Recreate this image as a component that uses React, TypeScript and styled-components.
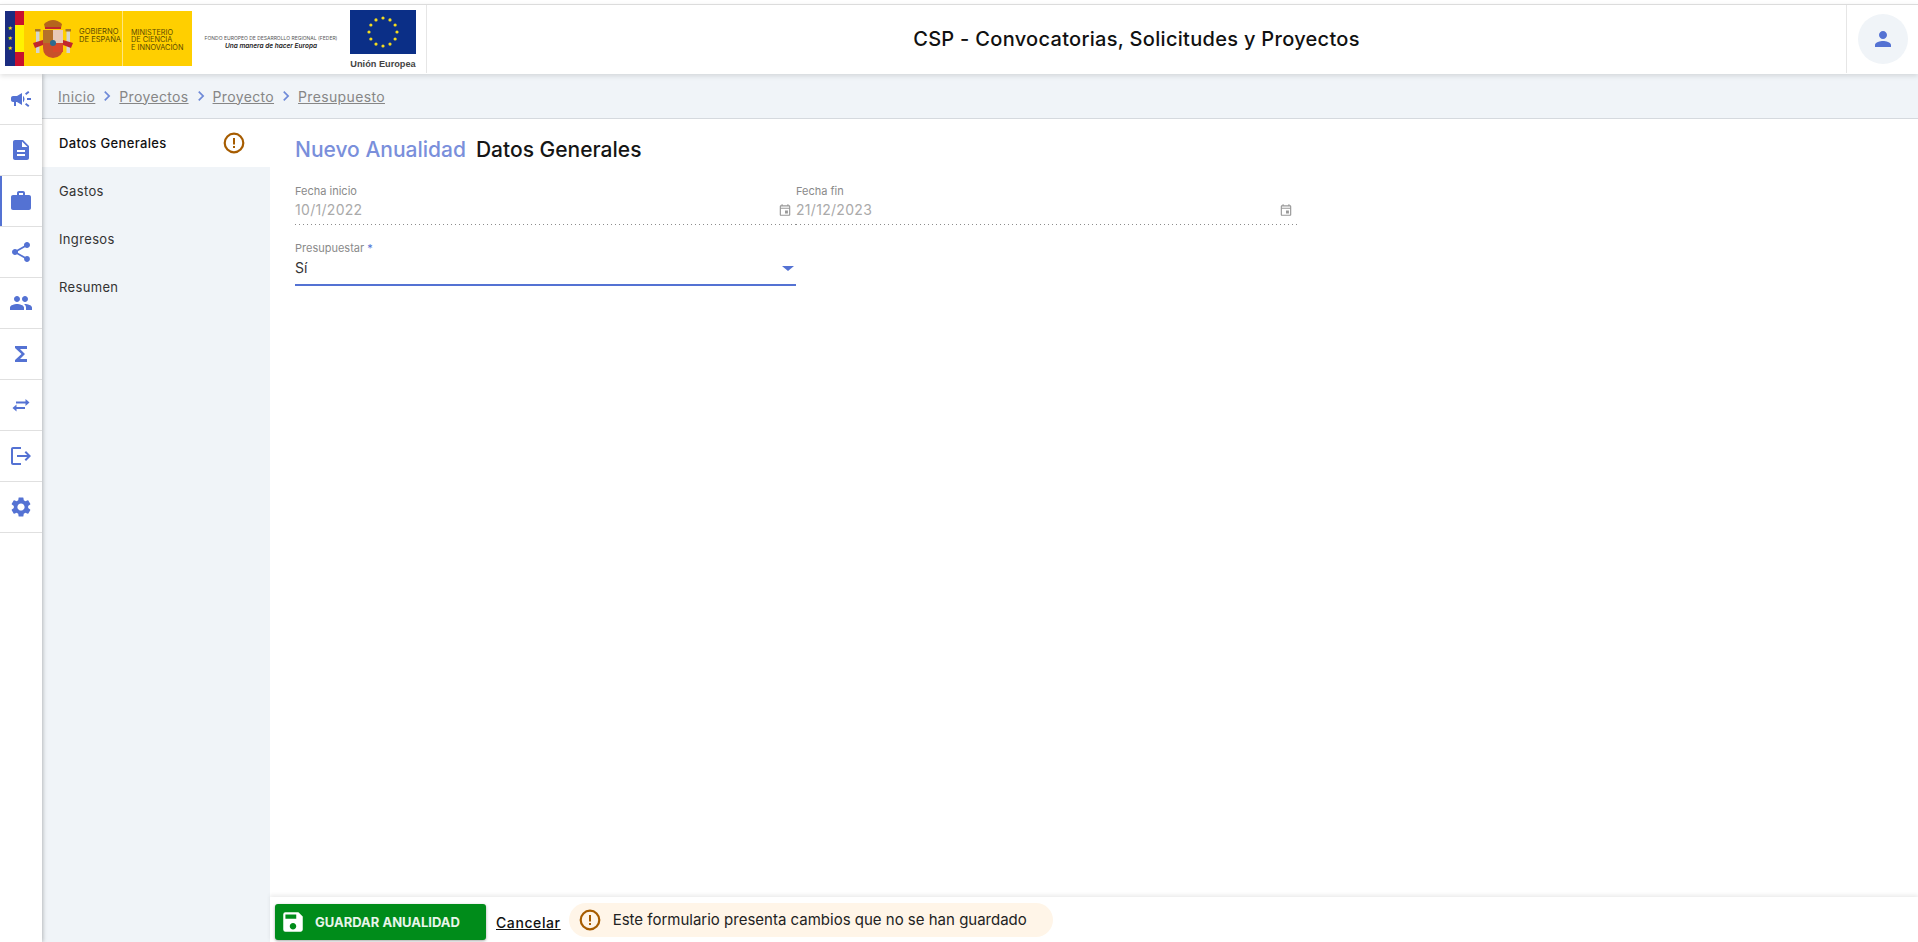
import React from "react";
import styled, { createGlobalStyle } from "styled-components";
import {
  MdCampaign,
  MdDescription,
  MdWork,
  MdShare,
  MdPeople,
  MdFunctions,
  MdLogout,
  MdSettings,
  MdPerson,
  MdSave,
  MdOutlineEvent,
  MdChevronRight,
} from "react-icons/md";

function SwapArrows() {
  return (
    <svg width="20" height="14" viewBox="0 0 20 14" fill="none" stroke="currentColor" strokeWidth="2">
      <path d="M5 4.5 H17" />
      <path d="M14.5 1 L18.5 4.5 L14.5 8" fill="currentColor" stroke="none" />
      <path d="M3 10 H14" />
      <path d="M5.5 6.5 L1.5 10 L5.5 13.5" fill="currentColor" stroke="none" />
    </svg>
  );
}

function WarnIcon() {
  return (
    <svg width="24" height="24" viewBox="0 0 24 24" fill="none">
      <circle cx="12" cy="12" r="9.3" stroke="#a65c00" strokeWidth="2.2" />
      <rect x="11" y="7" width="2" height="6.5" fill="#a65c00" />
      <rect x="11" y="15" width="2" height="2" fill="#a65c00" />
    </svg>
  );
}

const railItems = [
  { icon: MdCampaign },
  { icon: MdDescription },
  { icon: MdWork, active: true },
  { icon: MdShare },
  { icon: MdPeople },
  { icon: MdFunctions },
  { icon: SwapArrows },
  { icon: MdLogout },
  { icon: MdSettings },
];

const crumbs = ["Inicio", "Proyectos", "Proyecto", "Presupuesto"];

function EuStars() {
  const stars = Array.from({ length: 12 }, (_, i) => {
    const a = (i * Math.PI) / 6;
    return { x: 33 + 14 * Math.sin(a), y: 22 - 14 * Math.cos(a) };
  });
  return (
    <svg width="66" height="44" viewBox="0 0 66 44">
      <rect width="66" height="44" fill="#0b2f87" />
      {stars.map((s, i) => (
        <circle key={i} cx={s.x} cy={s.y} r="1.6" fill="#f5dc1e" />
      ))}
    </svg>
  );
}

function Shield() {
  return (
    <svg width="40" height="40" viewBox="0 0 40 40">
      <rect x="3" y="12" width="3.5" height="22" fill="#d4d4d0" />
      <rect x="33.5" y="12" width="3.5" height="22" fill="#d4d4d0" />
      <rect x="2" y="10" width="5.5" height="2.5" fill="#a8772a" />
      <rect x="32.5" y="10" width="5.5" height="2.5" fill="#a8772a" />
      <path d="M0 24 L10 21 L10 26 L2 29 Z" fill="#c1272d" />
      <path d="M40 24 L30 21 L30 26 L38 29 Z" fill="#c1272d" />
      <path d="M11 5 Q20 -3 29 5 L28 9 L12 9 Z" fill="#b5651d" />
      <rect x="12" y="8" width="16" height="2" fill="#c1272d" />
      <path d="M10 11 H30 V29 Q30 38 20 39 Q10 38 10 29 Z" fill="#c8502a" />
      <rect x="10" y="11" width="10" height="13" fill="#b5702a" />
      <rect x="20" y="11" width="10" height="13" fill="#e8c9b8" />
      <rect x="20" y="24" width="10" height="9" fill="#d8482a" />
      <circle cx="20" cy="24" r="3" fill="#2d6b8f" />
    </svg>
  );
}

export default function App() {
  return (
    <Page>
      <GlobalStyle />
      <Header>
        <LogoCell>
          <GovLogo>
            <Flag>
              <FlagBlue>
                <FlagStar>★</FlagStar>
                <FlagStar>★</FlagStar>
                <FlagStar>★</FlagStar>
              </FlagBlue>
              <FlagStripes />
            </Flag>
            <ShieldBox>
              <Shield />
            </ShieldBox>
            <GovText>
              GOBIERNO
              <br />
              DE ESPAÑA
            </GovText>
            <GovDivider />
            <MinistryText>
              MINISTERIO
              <br />
              DE CIENCIA
              <br />E INNOVACIÓN
            </MinistryText>
          </GovLogo>
          <Feder>
            <FederTitle>FONDO EUROPEO DE DESARROLLO REGIONAL (FEDER)</FederTitle>
            <FederSlogan>Una manera de hacer Europa</FederSlogan>
          </Feder>
          <EuLogo>
            <EuStars />
            <EuName>Unión Europea</EuName>
          </EuLogo>
        </LogoCell>
        <AppTitle>CSP - Convocatorias, Solicitudes y Proyectos</AppTitle>
        <UserCell>
          <Avatar>
            <MdPerson />
          </Avatar>
        </UserCell>
      </Header>
      <Body>
        <Rail>
          {railItems.map(({ icon: Icon, active }, i) => (
            <RailItem key={i} $active={active}>
              <Icon />
            </RailItem>
          ))}
        </Rail>
        <Main>
          <Breadcrumb>
            {crumbs.map((c, i) => (
              <React.Fragment key={c}>
                {i > 0 && (
                  <CrumbSep>
                    <MdChevronRight />
                  </CrumbSep>
                )}
                <Crumb>{c}</Crumb>
              </React.Fragment>
            ))}
          </Breadcrumb>
          <Workspace>
            <SideMenu>
              <MenuItem $active>
                Datos Generales
                <MenuWarn>
                  <WarnIcon />
                </MenuWarn>
              </MenuItem>
              <MenuItem>Gastos</MenuItem>
              <MenuItem>Ingresos</MenuItem>
              <MenuItem>Resumen</MenuItem>
            </SideMenu>
            <Content>
              <Form>
                <TitleRow>
                  <TitleAccent>Nuevo Anualidad</TitleAccent>
                  <TitleDark>Datos Generales</TitleDark>
                </TitleRow>
                <DateRow>
                  <DateField>
                    <FieldLabel>Fecha inicio</FieldLabel>
                    <DateValue>
                      10/1/2022
                      <MdOutlineEvent />
                    </DateValue>
                  </DateField>
                  <DateField>
                    <FieldLabel>Fecha fin</FieldLabel>
                    <DateValue>
                      21/12/2023
                      <MdOutlineEvent />
                    </DateValue>
                  </DateField>
                </DateRow>
                <SelectField>
                  <FieldLabel>
                    Presupuestar <Required>*</Required>
                  </FieldLabel>
                  <SelectValue>
                    Sí
                    <SelectArrow />
                  </SelectValue>
                </SelectField>
              </Form>
              <Footer>
                <SaveButton>
                  <MdSave />
                  GUARDAR ANUALIDAD
                </SaveButton>
                <CancelLink>Cancelar</CancelLink>
                <Notice>
                  <WarnIcon />
                  Este formulario presenta cambios que no se han guardado
                </Notice>
              </Footer>
            </Content>
          </Workspace>
        </Main>
      </Body>
    </Page>
  );
}

const GlobalStyle = createGlobalStyle`
  html, body {
    margin: 0;
    padding: 0;
    height: 100%;
    background: #fff;
    font-family: Inter, "Noto Sans", sans-serif;
  }
  * {
    box-sizing: border-box;
  }
`;

const Page = styled.div`
  height: 942px;
  overflow: hidden;
  display: flex;
  flex-direction: column;
  padding-top: 4px;
`;

const Header = styled.header`
  height: 70px;
  flex: none;
  display: flex;
  background: #fff;
  border-top: 1px solid #dcdcdc;
  position: relative;
  z-index: 3;
  box-shadow: 0 2px 5px rgba(0, 0, 0, 0.12);
`;

const LogoCell = styled.div`
  width: 427px;
  height: 68px;
  flex: none;
  display: flex;
  align-items: flex-start;
  padding: 5px 0 0 5px;
  border-right: 1px solid #e6e6e6;
`;

const GovLogo = styled.div`
  width: 187px;
  height: 55px;
  flex: none;
  display: flex;
  align-items: center;
  margin-top: 1px;
  background: #ffcf00;
`;

const Flag = styled.div`
  width: 19px;
  height: 100%;
  flex: none;
  display: flex;
`;

const FlagBlue = styled.div`
  width: 10px;
  background: #1b2c80;
  display: flex;
  flex-direction: column;
  justify-content: center;
  align-items: center;
  gap: 5px;
`;

const FlagStar = styled.span`
  color: #ffe600;
  font-size: 5px;
  line-height: 5px;
`;

const FlagStripes = styled.div`
  width: 9px;
  background: linear-gradient(#c8102e 0 25%, #fff200 25% 75%, #c8102e 75%);
`;

const ShieldBox = styled.div`
  width: 40px;
  height: 40px;
  flex: none;
  margin-left: 9px;
  margin-right: 6px;
`;

const GovText = styled.div`
  width: 43px;
  font-size: 7.6px;
  line-height: 8px;
  color: #5b4a00;
  white-space: nowrap;
  margin-bottom: 5px;
`;

const GovDivider = styled.div`
  width: 1px;
  height: 100%;
  background: #ffe680;
  margin-right: 8px;
`;

const MinistryText = styled.div`
  font-size: 7.3px;
  line-height: 7.5px;
  color: #5b4a00;
  white-space: nowrap;
  margin-top: 3px;
`;

const Feder = styled.div`
  width: 158px;
  flex: none;
  display: flex;
  flex-direction: column;
  align-items: center;
  padding-top: 25px;
`;

const FederTitle = styled.div`
  font-size: 5px;
  line-height: 7px;
  color: #555;
  white-space: nowrap;
`;

const FederSlogan = styled.div`
  font-size: 6.5px;
  line-height: 9px;
  font-style: italic;
  font-weight: 600;
  color: #222;
  white-space: nowrap;
`;

const EuLogo = styled.div`
  width: 66px;
  flex: none;
  display: flex;
  flex-direction: column;
  svg {
    display: block;
  }
`;

const EuName = styled.div`
  font-family: "Liberation Sans", sans-serif;
  font-size: 9.2px;
  font-weight: 700;
  line-height: 10px;
  color: #444;
  text-align: center;
  white-space: nowrap;
  margin-top: 5px;
`;

const AppTitle = styled.div`
  flex: 1;
  height: 68px;
  display: flex;
  align-items: center;
  justify-content: center;
  font-size: 20px;
  font-weight: 500;
  color: #111;
  letter-spacing: 0.3px;
`;

const UserCell = styled.div`
  width: 72px;
  height: 68px;
  flex: none;
  display: flex;
  align-items: center;
  justify-content: center;
  border-left: 1px solid #e6e6e6;
`;

const Avatar = styled.div`
  width: 50px;
  height: 50px;
  border-radius: 50%;
  background: #f0f4f8;
  color: #5472d3;
  display: flex;
  align-items: center;
  justify-content: center;
  font-size: 24px;
`;

const Body = styled.div`
  flex: 1;
  min-height: 0;
  display: flex;
`;

const Rail = styled.nav`
  width: 42px;
  flex: none;
  background: #fff;
  position: relative;
  z-index: 2;
  box-shadow: 1px 0 4px rgba(0, 0, 0, 0.25);
`;

const RailItem = styled.div<{ $active?: boolean }>`
  height: 51px;
  display: flex;
  align-items: center;
  justify-content: center;
  border-bottom: 1px solid #e0e0e0;
  color: #5472d3;
  font-size: 24px;
  box-shadow: ${({ $active }) => ($active ? "inset 2px 0 0 #5472d3" : "none")};
`;

const Main = styled.div`
  flex: 1;
  min-width: 0;
  display: flex;
  flex-direction: column;
`;

const Breadcrumb = styled.div`
  height: 45px;
  flex: none;
  display: flex;
  align-items: center;
  gap: 2px;
  padding-left: 16px;
  background: #f0f4f8;
  border-bottom: 1px solid #d5d9de;
`;

const Crumb = styled.span`
  font-size: 14px;
  color: #868686;
  text-decoration: underline;
  letter-spacing: 0.35px;
`;

const CrumbSep = styled.span`
  display: flex;
  color: #6f8ad8;
  font-size: 20px;
`;

const Workspace = styled.div`
  flex: 1;
  min-height: 0;
  display: flex;
`;

const SideMenu = styled.aside`
  width: 228px;
  flex: none;
  background: #f0f4f8;
`;

const MenuItem = styled.div<{ $active?: boolean }>`
  height: 48px;
  display: flex;
  align-items: center;
  justify-content: space-between;
  padding: 0 24px 0 17px;
  font-size: 13px;
  letter-spacing: 0.35px;
  color: ${({ $active }) => ($active ? "#111" : "#333")};
  font-weight: ${({ $active }) => ($active ? 500 : 400)};
  background: ${({ $active }) => ($active ? "#fff" : "transparent")};
`;

const MenuWarn = styled.span`
  display: flex;
`;

const Content = styled.main`
  flex: 1;
  min-width: 0;
  display: flex;
  flex-direction: column;
`;

const Form = styled.div`
  flex: 1;
  padding: 18px 0 0 25px;
`;

const TitleRow = styled.div`
  display: flex;
  gap: 10px;
  font-size: 21px;
  font-weight: 500;
  line-height: 26px;
`;

const TitleAccent = styled.span`
  color: #7a8fdb;
`;

const TitleDark = styled.span`
  color: #151515;
`;

const DateRow = styled.div`
  display: flex;
  width: 1002px;
  margin-top: 20px;
`;

const DateField = styled.div`
  width: 501px;
  padding-bottom: 5px;
  background: linear-gradient(to right, #8c8c8c 1px, transparent 1px) left bottom / 4px 1px repeat-x;
`;

const FieldLabel = styled.div`
  font-size: 11px;
  line-height: 16px;
  color: #8a8a8a;
`;

const DateValue = styled.div`
  display: flex;
  align-items: center;
  justify-content: space-between;
  font-size: 14px;
  line-height: 20px;
  color: #aaaaaa;
  letter-spacing: 0.3px;
  padding-top: 1px;
  svg {
    font-size: 14px;
    color: #999;
    margin-right: 4px;
  }
`;

const SelectField = styled.div`
  width: 501px;
  margin-top: 15px;
  border-bottom: 2px solid #5472d3;
  padding-bottom: 6px;
`;

const Required = styled.span`
  color: #5472d3;
`;

const SelectValue = styled.div`
  display: flex;
  align-items: center;
  justify-content: space-between;
  font-size: 14px;
  line-height: 20px;
  color: #333;
  padding: 2px 2px 0 0;
`;

const SelectArrow = styled.span`
  width: 0;
  height: 0;
  border-left: 6px solid transparent;
  border-right: 6px solid transparent;
  border-top: 5px solid #5472d3;
`;

const Footer = styled.div`
  height: 45px;
  flex: none;
  display: flex;
  align-items: center;
  gap: 8px;
  padding-left: 5px;
  background: #fff;
  box-shadow: 0 -2px 4px rgba(0, 0, 0, 0.08);
`;

const SaveButton = styled.div`
  width: 211px;
  height: 36px;
  margin-right: 2px;
  display: flex;
  align-items: center;
  gap: 9px;
  padding-left: 5px;
  margin-top: 5px;
  border-radius: 3px;
  background: #008c1a;
  color: #e9f5ea;
  font-size: 13px;
  font-weight: 700;
  white-space: nowrap;
  box-shadow: 0 1px 3px rgba(0, 0, 0, 0.35);
  svg {
    font-size: 26px;
    color: #fff;
  }
`;

const CancelLink = styled.span`
  font-size: 14px;
  font-weight: 500;
  letter-spacing: 0.6px;
  color: #111;
  text-decoration: underline;
  margin-top: 5px;
`;

const Notice = styled.div`
  height: 34px;
  width: 484px;
  display: flex;
  align-items: center;
  gap: 11px;
  padding-left: 9px;
  border-radius: 17px;
  background: #fff5e8;
  font-size: 15px;
  color: #222;
  white-space: nowrap;
`;
